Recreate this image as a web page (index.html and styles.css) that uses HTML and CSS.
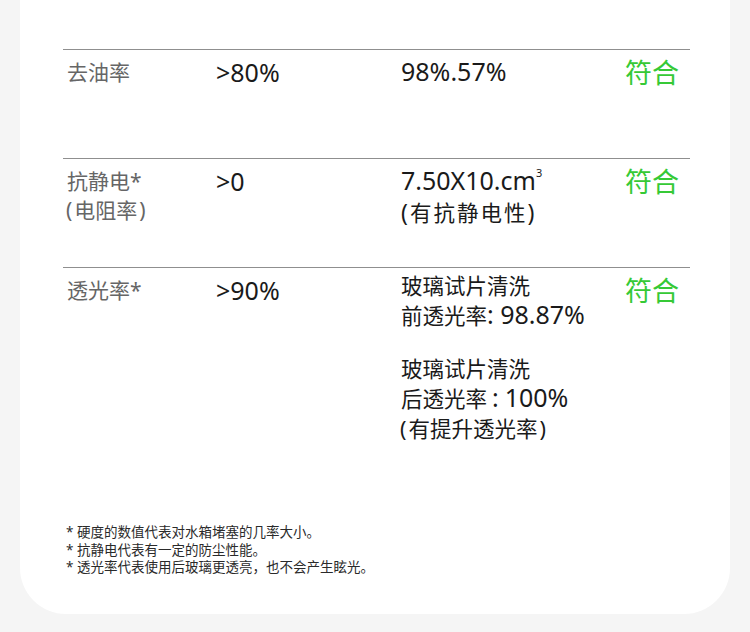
FILE: index.html
```html
<!DOCTYPE html>
<html lang="zh-CN">
<head>
<meta charset="utf-8">
<title>检测结果</title>
<link rel="stylesheet" href="styles.css">
</head>
<body>
<div class="card">
  <div class="table">
    <div class="row">
      <div class="c-name">去油率</div>
      <div class="c-std">&gt;80%</div>
      <div class="c-res"><span class="num">98%.57%</span></div>
      <div class="c-ok">符合</div>
    </div>
    <div class="row">
      <div class="c-name">抗静电*<br><span class="paren paren-l">(</span>电阻率<span class="paren">)</span></div>
      <div class="c-std">&gt;0</div>
      <div class="c-res c-res-two"><span class="num">7.50X10.cm</span><span class="sup">3</span><br><span class="spaced"><span class="num-sm">(</span>有抗静电性<span class="num-sm">)</span></span></div>
      <div class="c-ok">符合</div>
    </div>
    <div class="row row-last">
      <div class="c-name">透光率*</div>
      <div class="c-std">&gt;90%</div>
      <div class="c-res c-res-multi">
        <p class="para">玻璃试片清洗<br>前透光率<span class="num">: 98.87%</span></p>
        <p class="para">玻璃试片清洗<br>后透光率<span class="colon">:</span><span class="num">100%</span><br><span class="paren paren-l">(</span>有提升透光率<span class="paren">)</span></p>
      </div>
      <div class="c-ok">符合</div>
    </div>
  </div>
  <div class="notes">
    <p class="note">* 硬度的数值代表对水箱堵塞的几率大小。</p>
    <p class="note">* 抗静电代表有一定的防尘性能。</p>
    <p class="note">* 透光率代表使用后玻璃更透亮，也不会产生眩光。</p>
  </div>
</div>
</body>
</html>
```

FILE: styles.css
```css
html, body {
  margin: 0;
  padding: 0;
}
body {
  background: #f5f5f5;
  font-family: "Noto Sans", "Noto Sans CJK SC", sans-serif;
  width: 750px;
  height: 632px;
  overflow: hidden;
}
.card {
  margin: 0 20px;
  background: #ffffff;
  border-radius: 0 0 46px 46px;
  padding: 49px 40px 37px 43px;
}
.row {
  display: grid;
  grid-template-columns: 149px 185px 224px 1fr;
  border-top: 1px solid #8f8f8f;
  padding: 8px 0 0 4px;
  height: 109px;
  box-sizing: border-box;
}
.row-last {
  height: auto;
}
.c-name {
  font-size: 21px;
  line-height: 29px;
  color: #666666;
}
.paren {
  display: inline-block;
  padding: 0 2px;
}
.paren-l {
  margin-left: -3px;
}
.c-std {
  font-size: 25px;
  line-height: 29px;
  color: #1a1a1a;
}
.c-res {
  font-size: 21.5px;
  line-height: 30px;
  color: #1a1a1a;
}
.c-res-two {
  line-height: 31px;
  margin-top: -1px;
}
.num {
  font-size: 25px;
  line-height: 1;
}
.num-sm {
  font-size: 23px;
  line-height: 1;
}
.spaced {
  letter-spacing: 2px;
}
.c-res-multi {
  margin-top: -5px;
}
.para {
  margin: 0 0 23px;
}
.para:last-child {
  margin-bottom: 0;
}
.colon {
  display: inline-block;
  font-size: 25px;
  line-height: 1;
  padding: 0 6px 0 5px;
}
.sup {
  font-size: 11px;
  vertical-align: 13px;
  line-height: 0;
}
.c-ok {
  font-size: 27px;
  line-height: 29px;
  color: #36c936;
}
.notes {
  margin-top: 80px;
  padding-left: 3px;
}
.note {
  margin: 0;
  font-size: 13.5px;
  line-height: 17.7px;
  color: #2a2a2a;
}
```
